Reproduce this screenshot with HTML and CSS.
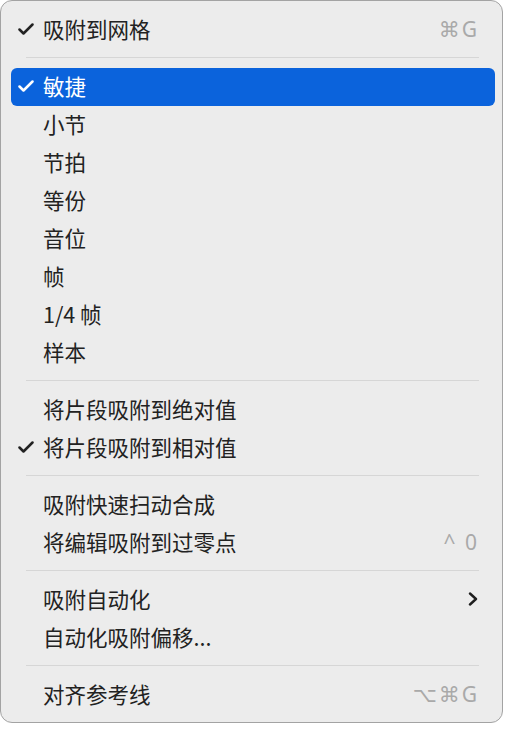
FILE: index.html
```html
<!DOCTYPE html>
<html lang="zh-CN">
<head>
    <meta charset="UTF-8">
    <title>吸附菜单</title>
    <link rel="stylesheet" href="styles.css">
</head>
<body>
    <div class="menu">
        <div class="menu-item">
            <span class="check"><svg viewBox="0 0 16 12"><path d="M1.5 6.5 L5.5 10.5 L14.5 1.5"/></svg></span>
            <span class="label">吸附到网格</span>
            <span class="shortcut">⌘G</span>
        </div>
        <div class="separator"></div>

        <div class="menu-item selected">
            <span class="check"><svg viewBox="0 0 16 12"><path d="M1.5 6.5 L5.5 10.5 L14.5 1.5"/></svg></span>
            <span class="label">敏捷</span>
        </div>
        <div class="menu-item"><span class="check"></span><span class="label">小节</span></div>
        <div class="menu-item"><span class="check"></span><span class="label">节拍</span></div>
        <div class="menu-item"><span class="check"></span><span class="label">等份</span></div>
        <div class="menu-item"><span class="check"></span><span class="label">音位</span></div>
        <div class="menu-item"><span class="check"></span><span class="label">帧</span></div>
        <div class="menu-item"><span class="check"></span><span class="label">1/4 帧</span></div>
        <div class="menu-item"><span class="check"></span><span class="label">样本</span></div>
        <div class="separator"></div>

        <div class="menu-item"><span class="check"></span><span class="label">将片段吸附到绝对值</span></div>
        <div class="menu-item">
            <span class="check"><svg viewBox="0 0 16 12"><path d="M1.5 6.5 L5.5 10.5 L14.5 1.5"/></svg></span>
            <span class="label">将片段吸附到相对值</span>
        </div>
        <div class="separator"></div>

        <div class="menu-item"><span class="check"></span><span class="label">吸附快速扫动合成</span></div>
        <div class="menu-item">
            <span class="check"></span>
            <span class="label">将编辑吸附到过零点</span>
            <span class="shortcut">^ 0</span>
        </div>
        <div class="separator"></div>

        <div class="menu-item">
            <span class="check"></span>
            <span class="label">吸附自动化</span>
            <span class="submenu"><svg viewBox="0 0 10 14"><path d="M2 1.5 L8 7 L2 12.5"/></svg></span>
        </div>
        <div class="menu-item"><span class="check"></span><span class="label">自动化吸附偏移...</span></div>
        <div class="separator"></div>

        <div class="menu-item">
            <span class="check"></span>
            <span class="label">对齐参考线</span>
            <span class="shortcut">⌥⌘G</span>
        </div>
    </div>
</body>
</html>
```

FILE: styles.css
```css
* {
    margin: 0;
    padding: 0;
    box-sizing: border-box;
}

body {
    background: #ffffff;
    font-family: "Noto Sans", "Noto Sans CJK SC", sans-serif;
    color: #222222;
}

.menu {
    width: 503px;
    height: 723px;
    background: #ececec;
    border: 1px solid #a3a3a3;
    border-radius: 12px;
    padding: 10px 7px 7px 10px;
}

.menu-item {
    display: flex;
    align-items: center;
    height: 38px;
    padding-bottom: 3px;
    border-radius: 6px;
    font-size: 21.5px;
}

.menu-item.selected {
    background: #0b63dc;
    color: #ffffff;
}

.check {
    width: 34px;
    padding-left: 7px;
    display: flex;
    align-items: center;
}

.check svg {
    width: 16px;
    height: 12px;
    fill: none;
    stroke: currentColor;
    stroke-width: 2.5;
    stroke-linecap: round;
    stroke-linejoin: round;
}

.label {
    flex: 1;
    margin-left: -2px;
    font-family: "Noto Sans CJK SC", sans-serif;
}

.shortcut {
    margin-right: 16px;
    color: #a9a9a9;
    font-family: "Noto Sans", "DejaVu Sans", sans-serif;
    font-size: 21px;
    letter-spacing: 2px;
}

.submenu {
    margin-right: 16px;
    display: flex;
}

.submenu svg {
    width: 12px;
    height: 14px;
    fill: none;
    stroke: #1e1e1e;
    stroke-width: 2.4;
    stroke-linecap: round;
    stroke-linejoin: round;
}

.separator {
    height: 1px;
    background: #d6d6d6;
    margin: 8px 16px 10px 15px;
}

.menu-item + .separator + .menu-item {
    margin-top: 1px;
}
```
